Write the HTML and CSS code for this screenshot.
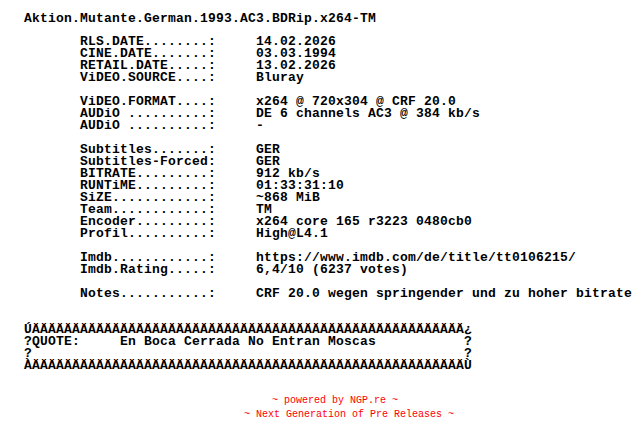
FILE: index.html
```html
<!DOCTYPE html>
<html>
<head>
<meta charset="utf-8">
<link rel="stylesheet" href="styles.css">
</head>
<body>
<div class="nfo">
<div class="title">Aktion.Mutante.German.1993.AC3.BDRip.x264-TM</div>
<pre class="info">       RLS.DATE........:     14.02.2026
       CINE.DATE.......:     03.03.1994
       RETAIL.DATE.....:     13.02.2026
       ViDEO.SOURCE....:     Bluray

       ViDEO.FORMAT....:     x264 @ 720x304 @ CRF 20.0
       AUDiO ..........:     DE 6 channels AC3 @ 384 kb/s
       AUDiO ..........:     -

       Subtitles.......:     GER
       Subtitles-Forced:     GER
       BITRATE.........:     912 kb/s
       RUNTiME.........:     01:33:31:10
       SiZE............:     ~868 MiB
       Team............:     TM
       Encoder.........:     x264 core 165 r3223 0480cb0
       Profil..........:     High@L4.1

       Imdb............:     https://www.imdb.com/de/title/tt0106215/
       Imdb.Rating.....:     6,4/10 (6237 votes)

       Notes...........:     CRF 20.0 wegen springender und zu hoher bitrate


ÚÄÄÄÄÄÄÄÄÄÄÄÄÄÄÄÄÄÄÄÄÄÄÄÄÄÄÄÄÄÄÄÄÄÄÄÄÄÄÄÄÄÄÄÄÄÄÄÄÄÄÄÄÄÄ¿
?QUOTE:     En Boca Cerrada No Entran Moscas           ?
?                                                      ?
ÀÄÄÄÄÄÄÄÄÄÄÄÄÄÄÄÄÄÄÄÄÄÄÄÄÄÄÄÄÄÄÄÄÄÄÄÄÄÄÄÄÄÄÄÄÄÄÄÄÄÄÄÄÄÄÙ</pre>
</div>
<div class="footer">
  <div class="line1">~ powered by NGP.re ~</div>
  <div class="line2">~ Next Generation of Pre Releases ~</div>
</div>
</body>
</html>
```

FILE: styles.css
```css
html, body {
  margin: 0;
  padding: 0;
  background: #ffffff;
}
.nfo {
  padding-left: 24px;
  font-family: "Liberation Mono", "DejaVu Sans Mono", monospace;
  font-weight: bold;
  font-size: 13px;
  letter-spacing: 0.2px;
  color: #000000;
}
.title {
  margin-top: 13px;
  line-height: 12px;
  white-space: pre;
}
.info {
  margin: 11px 0 0 0;
  font: inherit;
  line-height: 12px;
  white-space: pre;
}
.footer {
  margin-top: 22px;
  font-family: "Liberation Mono", "DejaVu Sans Mono", monospace;
  font-size: 10px;
  line-height: 14px;
  color: #ff0000;
}
.line1,
.line2 {
  white-space: pre;
}
.line1 {
  padding-left: 272px;
}
.line2 {
  padding-left: 244px;
}
```
